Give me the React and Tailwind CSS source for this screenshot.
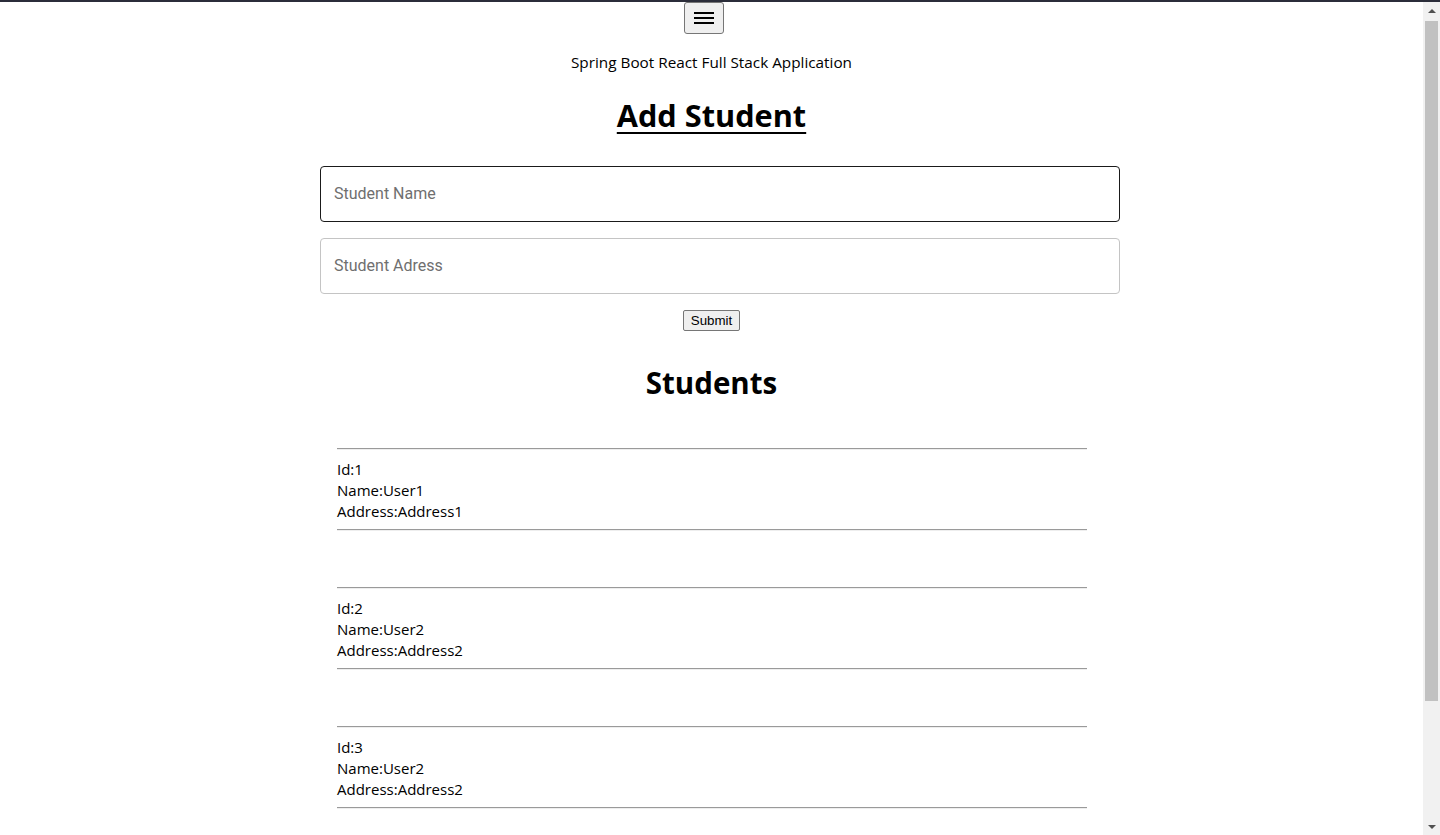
import React from "react";

const STUDENTS = [
  { id: 1, name: "User1", address: "Address1" },
  { id: 2, name: "User2", address: "Address2" },
  { id: 3, name: "User2", address: "Address2" },
];

function Rule() {
  return <div className="h-[2px] border-t border-t-[#9a9a9a] border-b border-b-[#eeeeee]" />;
}

function Scrollbar() {
  return (
    <div className="w-[17px] flex-shrink-0 bg-[#f1f1f1] flex flex-col items-center">
      <div className="h-[17px] flex items-center justify-center">
        <div className="w-0 h-0 border-l-[4px] border-r-[4px] border-b-[4px] border-l-transparent border-r-transparent border-b-[#505050]" />
      </div>
      <div className="mt-[2px] h-[680px] w-[13px] bg-[#c1c1c1]" />
      <div className="flex-1" />
      <div className="h-[17px] flex items-center justify-center">
        <div className="w-0 h-0 border-l-[4px] border-r-[4px] border-t-[4px] border-l-transparent border-r-transparent border-t-[#505050]" />
      </div>
    </div>
  );
}

export default function App() {
  return (
    <div className="h-[835px] w-[1440px] overflow-hidden bg-white flex flex-col font-['Open_Sans',sans-serif] text-black">
      <div className="h-[2px] bg-[#2b2d3a] flex-shrink-0" />
      <div className="flex flex-1 min-h-0">
        <main className="flex-1 overflow-hidden flex flex-col">
          {/* Menu button */}
          <div className="flex justify-center pr-[15px]">
            <button className="w-[40px] h-[32px] bg-[#efefef] border border-[#767676] rounded-[3px] flex flex-col items-center justify-center gap-[3px]">
              <span className="block w-[20px] h-[2px] bg-black" />
              <span className="block w-[20px] h-[2px] bg-black" />
              <span className="block w-[20px] h-[2px] bg-black" />
            </button>
          </div>

          <p className="mt-[18px] text-center text-[15.3px] leading-[21px]">Spring Boot React Full Stack Application</p>

          <h1 className="mt-[21px] text-center text-[30.7px] leading-[42px] font-bold underline decoration-[2px] underline-offset-[5px]">Add Student</h1>

          {/* Form */}
          <div className="mt-[30px] ml-[320px] w-[800px] flex flex-col gap-[16px]">
            <input
              placeholder="Student Name"
              className="h-[56px] w-full rounded-[4px] border border-[#1a1a1a] px-[13px] pb-[1px] font-['Roboto',sans-serif] text-[16px] outline-none placeholder:text-[#6f6f6f]"
            />
            <input
              placeholder="Student Adress"
              className="h-[56px] w-full rounded-[4px] border border-[#c4c4c4] px-[13px] pb-[1px] font-['Roboto',sans-serif] text-[16px] outline-none placeholder:text-[#6f6f6f]"
            />
          </div>
          <div className="mt-[16px] flex justify-center">
            <button className="h-[21px] px-[7px] bg-[#efefef] border border-[#767676] rounded-[2px] font-['Liberation_Sans',Arial,sans-serif] text-[13.33px] leading-[15px]">
              Submit
            </button>
          </div>

          <h1 className="mt-[31px] text-center text-[29.5px] leading-[42px] font-bold">Students</h1>

          {/* List */}
          <div className="mt-[44px] ml-[337px] w-[750px] flex flex-col gap-[56px]">
            {STUDENTS.map((s) => (
              <div key={s.id}>
                <Rule />
                <div className="mt-[9px] mb-[7px] text-[15px] leading-[21px]">
                  <div>Id:{s.id}</div>
                  <div>Name:{s.name}</div>
                  <div>Address:{s.address}</div>
                </div>
                <Rule />
              </div>
            ))}
          </div>
        </main>
        <Scrollbar />
      </div>
    </div>
  );
}
